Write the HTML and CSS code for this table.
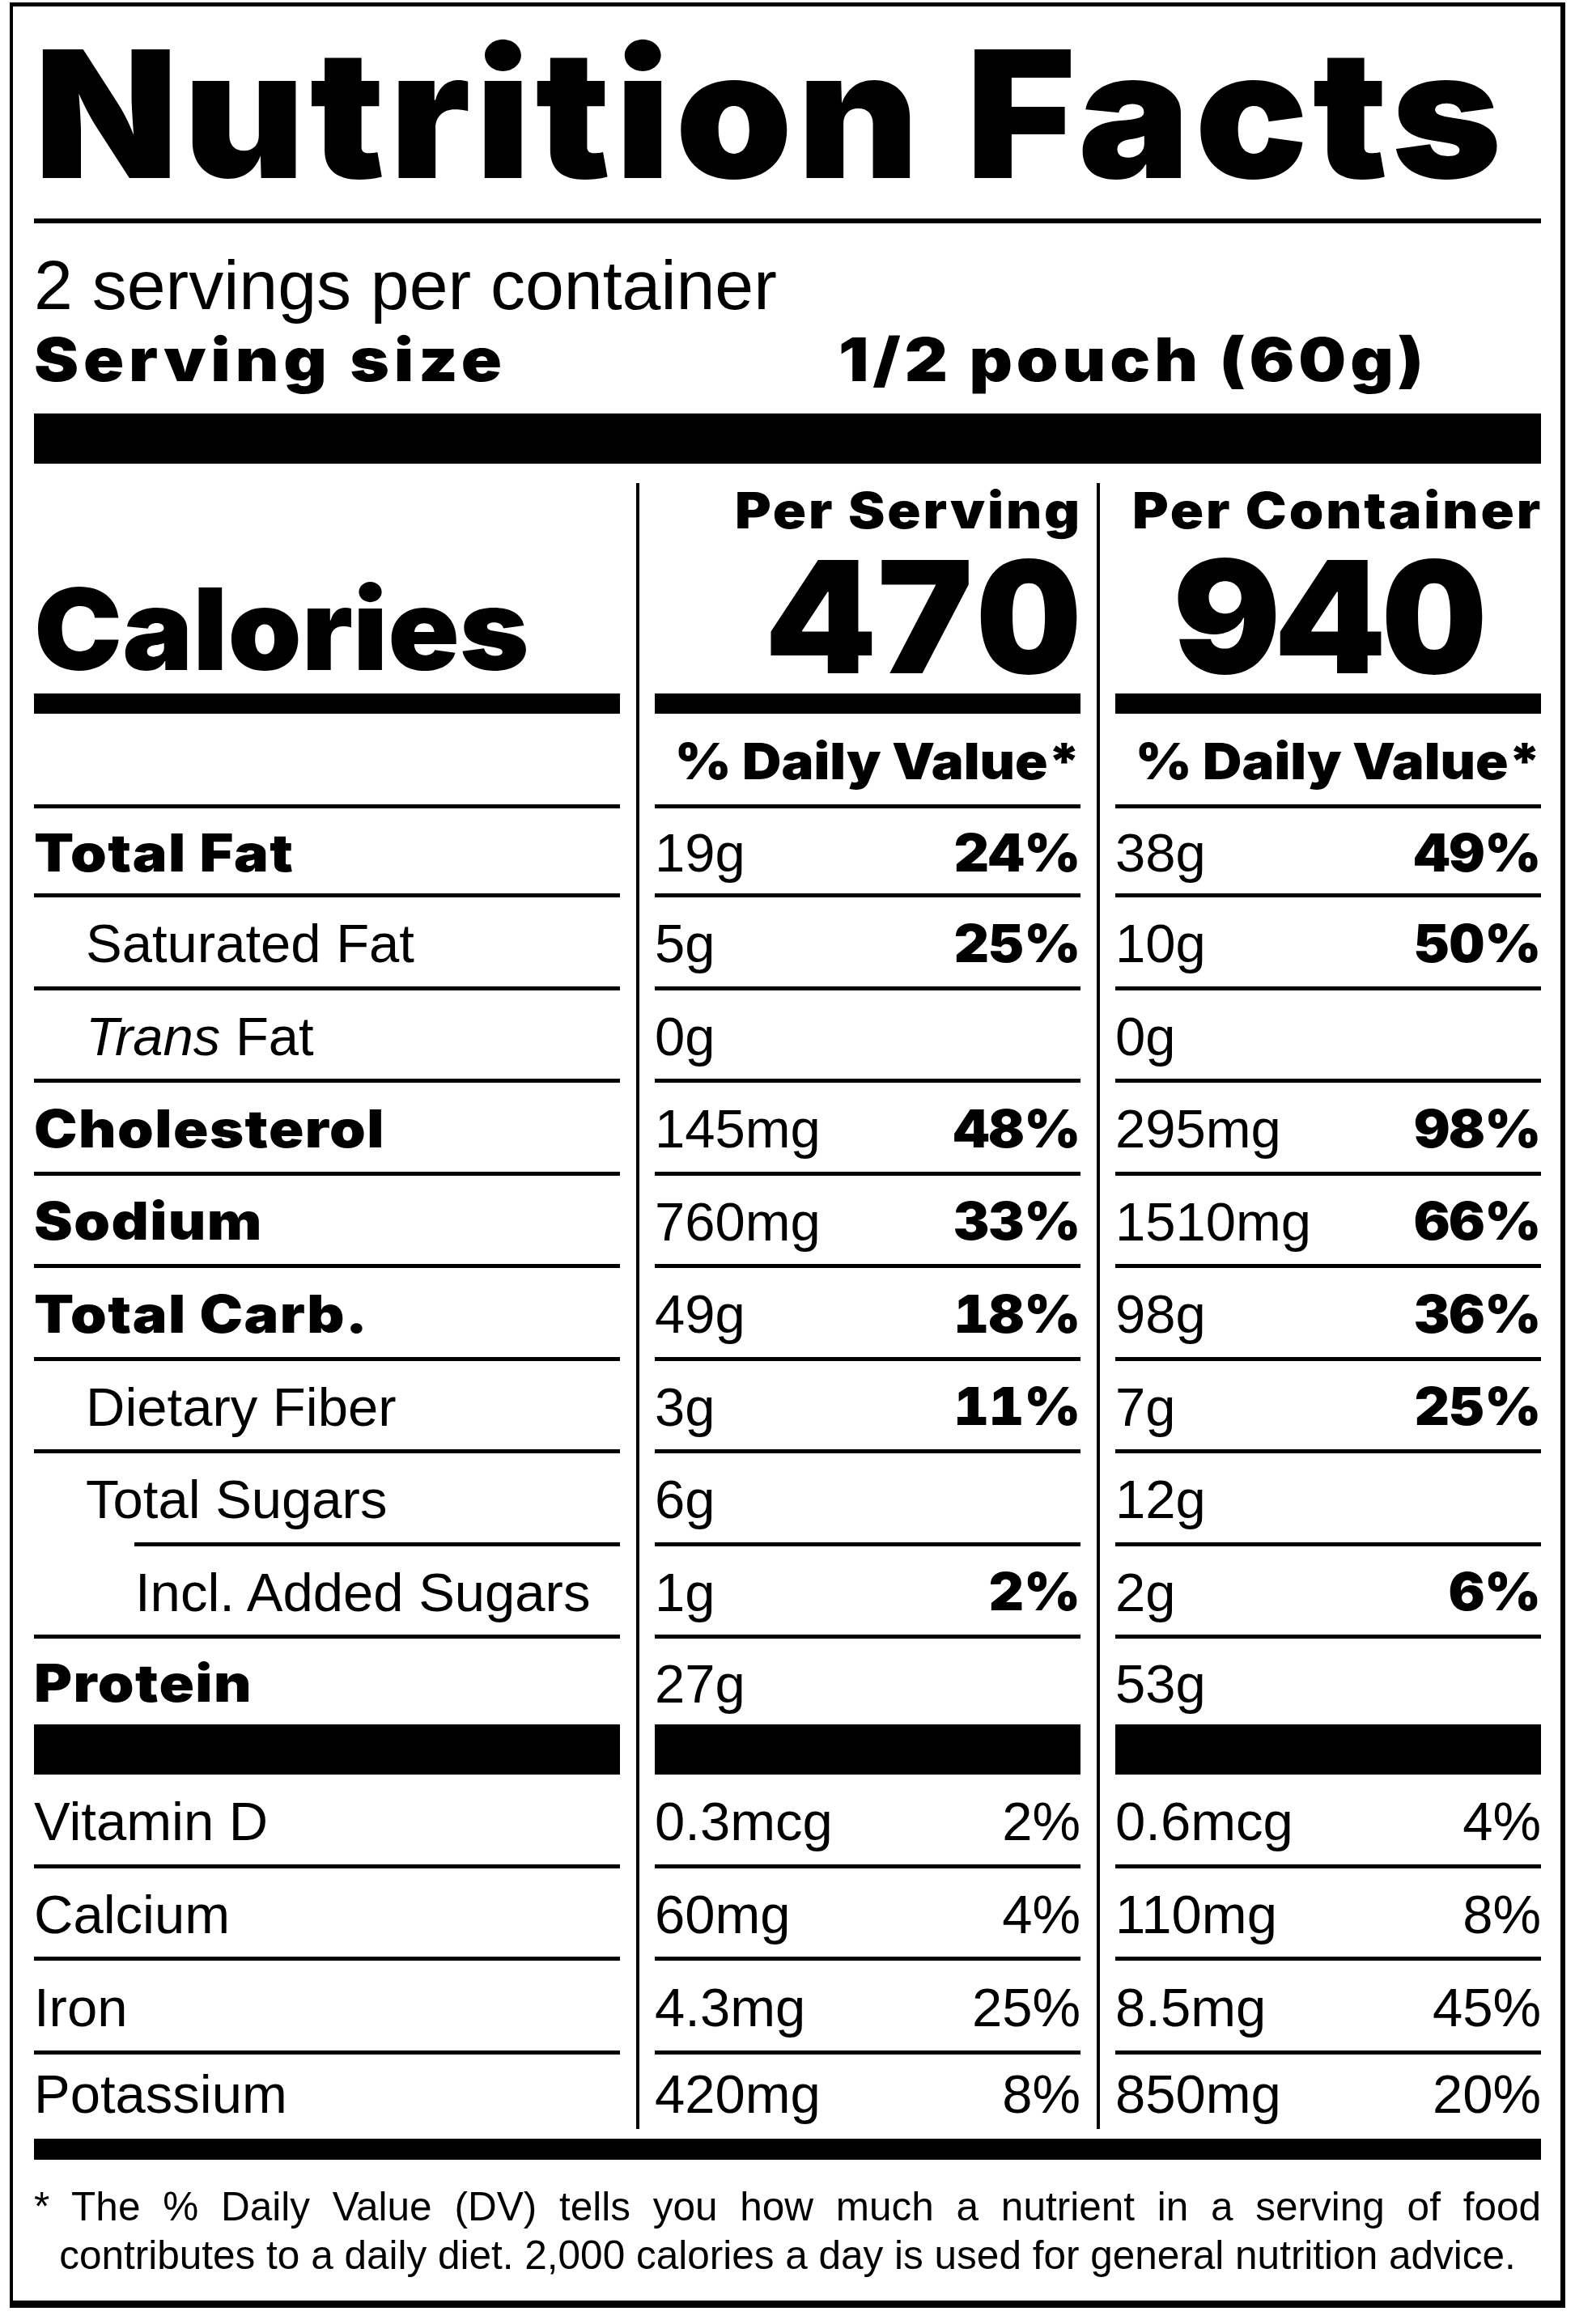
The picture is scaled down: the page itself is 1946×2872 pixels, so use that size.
FILE: index.html
```html
<!DOCTYPE html>
<html lang="en">
<head>
<meta charset="utf-8">
<title>Nutrition Facts</title>
<link rel="stylesheet" href="styles.css">
</head>
<body>
<div class="label">
  <h1 class="title">Nutrition Facts</h1>
  <div class="rule-thin"></div>
  <p class="servings">2 servings per container</p>
  <div class="serving-size"><span class="ss-label">Serving size</span><span class="ss-value">1/2 pouch (60g)</span></div>
  <div class="rule-thick"></div>

  <div class="grid">
    <div class="divider d1"></div>
    <div class="divider d2"></div>

    <div class="cell head head-cal"><span class="calories">Calories</span></div>
    <div class="cell head head-col"><span class="per">Per Serving</span><span class="big">470</span></div>
    <div class="cell head head-col last"><span class="per">Per Container</span><span class="big">940</span></div>

    <div class="cell dv"></div>
    <div class="cell dv"><span class="dvt">% Daily Value*</span></div>
    <div class="cell dv"><span class="dvt">% Daily Value*</span></div>

    <div class="cell"><span class="b">Total Fat</span></div>
    <div class="cell val"><span>19g</span><span class="pb">24%</span></div>
    <div class="cell val"><span>38g</span><span class="pb">49%</span></div>

    <div class="cell lvl1"><span>Saturated Fat</span></div>
    <div class="cell val"><span>5g</span><span class="pb">25%</span></div>
    <div class="cell val"><span>10g</span><span class="pb">50%</span></div>

    <div class="cell lvl1"><span><i>Trans</i> Fat</span></div>
    <div class="cell val"><span>0g</span></div>
    <div class="cell val"><span>0g</span></div>

    <div class="cell"><span class="b">Cholesterol</span></div>
    <div class="cell val"><span>145mg</span><span class="pb">48%</span></div>
    <div class="cell val"><span>295mg</span><span class="pb">98%</span></div>

    <div class="cell"><span class="b">Sodium</span></div>
    <div class="cell val"><span>760mg</span><span class="pb">33%</span></div>
    <div class="cell val"><span>1510mg</span><span class="pb">66%</span></div>

    <div class="cell"><span class="b">Total Carb.</span></div>
    <div class="cell val"><span>49g</span><span class="pb">18%</span></div>
    <div class="cell val"><span>98g</span><span class="pb">36%</span></div>

    <div class="cell lvl1"><span>Dietary Fiber</span></div>
    <div class="cell val"><span>3g</span><span class="pb">11%</span></div>
    <div class="cell val"><span>7g</span><span class="pb">25%</span></div>

    <div class="cell lvl1 indent-line"><span>Total Sugars</span></div>
    <div class="cell val"><span>6g</span></div>
    <div class="cell val"><span>12g</span></div>

    <div class="cell lvl2"><span>Incl. Added Sugars</span></div>
    <div class="cell val"><span>1g</span><span class="pb">2%</span></div>
    <div class="cell val"><span>2g</span><span class="pb">6%</span></div>

    <div class="cell heavy"><span class="b">Protein</span></div>
    <div class="cell val heavy"><span>27g</span></div>
    <div class="cell val heavy"><span>53g</span></div>

    <div class="cell"><span>Vitamin D</span></div>
    <div class="cell val"><span>0.3mcg</span><span>2%</span></div>
    <div class="cell val"><span>0.6mcg</span><span>4%</span></div>

    <div class="cell"><span>Calcium</span></div>
    <div class="cell val"><span>60mg</span><span>4%</span></div>
    <div class="cell val"><span>110mg</span><span>8%</span></div>

    <div class="cell"><span>Iron</span></div>
    <div class="cell val"><span>4.3mg</span><span>25%</span></div>
    <div class="cell val"><span>8.5mg</span><span>45%</span></div>

    <div class="cell open"><span>Potassium</span></div>
    <div class="cell val open"><span>420mg</span><span>8%</span></div>
    <div class="cell val open"><span>850mg</span><span>20%</span></div>
  </div>

  <div class="rule-foot"></div>
  <p class="footnote"><span class="fn-line1">* The % Daily Value (DV) tells you how much a nutrient in a serving of food</span><span class="fn-line2">contributes to a daily diet. 2,000 calories a day is used for general nutrition advice.</span></p>
</div>
</body>
</html>
```

FILE: styles.css
```css
* {
  box-sizing: border-box;
  margin: 0;
  padding: 0;
}

html,
body {
  background: #fff;
}

body {
  margin: 0;
  color: #000;
  font-family: "Liberation Sans", Arial, sans-serif;
}

.label {
  width: 1922px;
  margin: 3px 0 0 12px;
  border-style: solid;
  border-color: #000;
  border-width: 5px 6px 9px 4px;
  padding: 23px 24px 26px 26px;
}

.title {
  font: 900 219px/1 "Inter", "Liberation Sans", sans-serif;
  letter-spacing: 5.3px;
  white-space: nowrap;
  transform: scaleX(1.06);
  transform-origin: left center;
}

.rule-thin {
  height: 6px;
  margin-top: 20px;
  background: #000;
}

.servings {
  margin-top: 33px;
  font: 400 86px/1 "Liberation Sans", Arial, sans-serif;
}

.serving-size {
  display: flex;
  margin-top: 12px;
  font: 900 74px/1 "Inter", "Liberation Sans", sans-serif;
  white-space: nowrap;
}

.ss-label {
  width: 994px;
  letter-spacing: 5.2px;
  transform: scaleX(1.12);
  transform-origin: left center;
}

.ss-value {
  letter-spacing: 4.4px;
  transform: scaleX(1.12);
  transform-origin: left center;
}

.rule-thick {
  height: 62px;
  margin-top: 30px;
  background: #000;
}

.grid {
  display: grid;
  margin-top: 24px;
  grid-template-columns: 724px 43px 526px 43px 526px;
  grid-template-rows: 285px 117px 110px repeat(8, 114.5px) 168px 116px 114px 116px 92px;
}

.divider {
  grid-row: 1 / -1;
  width: 4px;
  justify-self: center;
  background: #000;
}

.d1 {
  grid-column: 2;
}

.d2 {
  grid-column: 4;
}

.cell {
  display: flex;
  align-items: center;
  padding-top: 4px;
  border-bottom: 5px solid #000;
  font: 400 67px/1 "Liberation Sans", Arial, sans-serif;
  white-space: nowrap;
}

.val {
  justify-content: space-between;
}

.b {
  font-family: "Inter", "Liberation Sans", sans-serif;
  font-weight: 900;
  font-size: 64px;
  letter-spacing: 1.3px;
  transform: scaleX(1.12);
  transform-origin: left center;
}

.pb {
  font-family: "Inter", "Liberation Sans", sans-serif;
  font-weight: 900;
  font-size: 64px;
  font-variant-numeric: tabular-nums;
  transform: scaleX(1.05);
  transform-origin: right center;
}

.lvl1 {
  padding-left: 64px;
}

.lvl2 {
  padding-left: 125px;
}

.indent-line {
  border-bottom-color: transparent;
  background: linear-gradient(#000, #000) right bottom / calc(100% - 124px) 5px no-repeat border-box;
}

.head {
  padding-top: 0;
  border-bottom-width: 25px;
}

.head-cal {
  align-items: flex-end;
  padding-bottom: 10px;
}

.calories {
  font: 900 140px/1 "Inter", "Liberation Sans", sans-serif;
  transform: scaleX(1.043);
  transform-origin: left center;
}

.head-col {
  flex-direction: column;
  align-items: flex-end;
  justify-content: flex-start;
  padding-top: 3px;
}

.per {
  font: 900 62px/1 "Inter", "Liberation Sans", sans-serif;
  margin-bottom: 4px;
  letter-spacing: 2.6px;
  margin-right: -2.6px;
  transform: scaleX(1.1);
  transform-origin: right center;
}

.big {
  font: 900 193px/1 "Inter", "Liberation Sans", sans-serif;
  font-variant-numeric: tabular-nums;
  transform: scaleX(1.03);
  transform-origin: right center;
}

.head-col.last .big {
  padding-right: 66px;
}

.dv {
  justify-content: flex-end;
  padding-top: 5px;
}

.dvt {
  font: 900 62px/1 "Inter", "Liberation Sans", sans-serif;
  transform: scaleX(1.08);
  transform-origin: right center;
}

.heavy {
  border-bottom-width: 62px;
}

.open {
  border-bottom: none;
}

.rule-foot {
  height: 26px;
  margin-top: 12px;
  background: #000;
}

.footnote {
  margin-top: 28px;
  font: 400 49.5px/60px "Liberation Sans", Arial, sans-serif;
}

.fn-line1 {
  display: block;
  text-align: justify;
  text-align-last: justify;
}

.fn-line2 {
  display: block;
  text-align: center;
}
```
